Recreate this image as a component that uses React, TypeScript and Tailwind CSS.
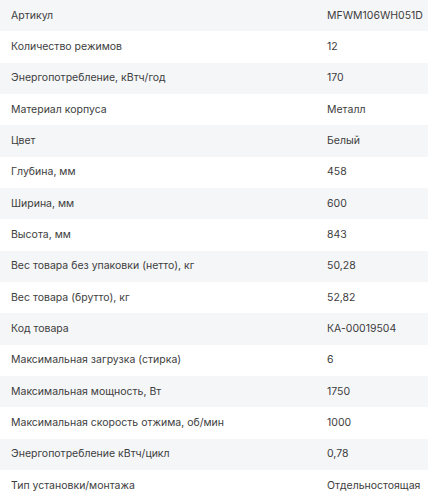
import React from 'react';

const specs: [string, string][] = [
  ['Артикул', 'MFWM106WH051D'],
  ['Количество режимов', '12'],
  ['Энергопотребление, кВтч/год', '170'],
  ['Материал корпуса', 'Металл'],
  ['Цвет', 'Белый'],
  ['Глубина, мм', '458'],
  ['Ширина, мм', '600'],
  ['Высота, мм', '843'],
  ['Вес товара без упаковки (нетто), кг', '50,28'],
  ['Вес товара (брутто), кг', '52,82'],
  ['Код товара', 'КА-00019504'],
  ['Максимальная загрузка (стирка)', '6'],
  ['Максимальная мощность, Вт', '1750'],
  ['Максимальная скорость отжима, об/мин', '1000'],
  ['Энергопотребление кВтч/цикл', '0,78'],
  ['Тип установки/монтажа', 'Отдельностоящая'],
];

export default function App() {
  return (
    <div className="w-[428px] h-[500px] overflow-hidden bg-white font-['Inter',sans-serif] text-[10.5px] text-[#3d3d3d]">
      {specs.map(([label, value], i) => (
        <div
          key={label}
          className={`grid grid-cols-[316px_1fr] items-center h-[31.33px] pl-[11px] ${i % 2 === 0 ? 'bg-[#f5f6f8]' : 'bg-white'}`}
        >
          <span className="whitespace-nowrap">{label}</span>
          <span className="whitespace-nowrap">{value}</span>
        </div>
      ))}
    </div>
  );
}
